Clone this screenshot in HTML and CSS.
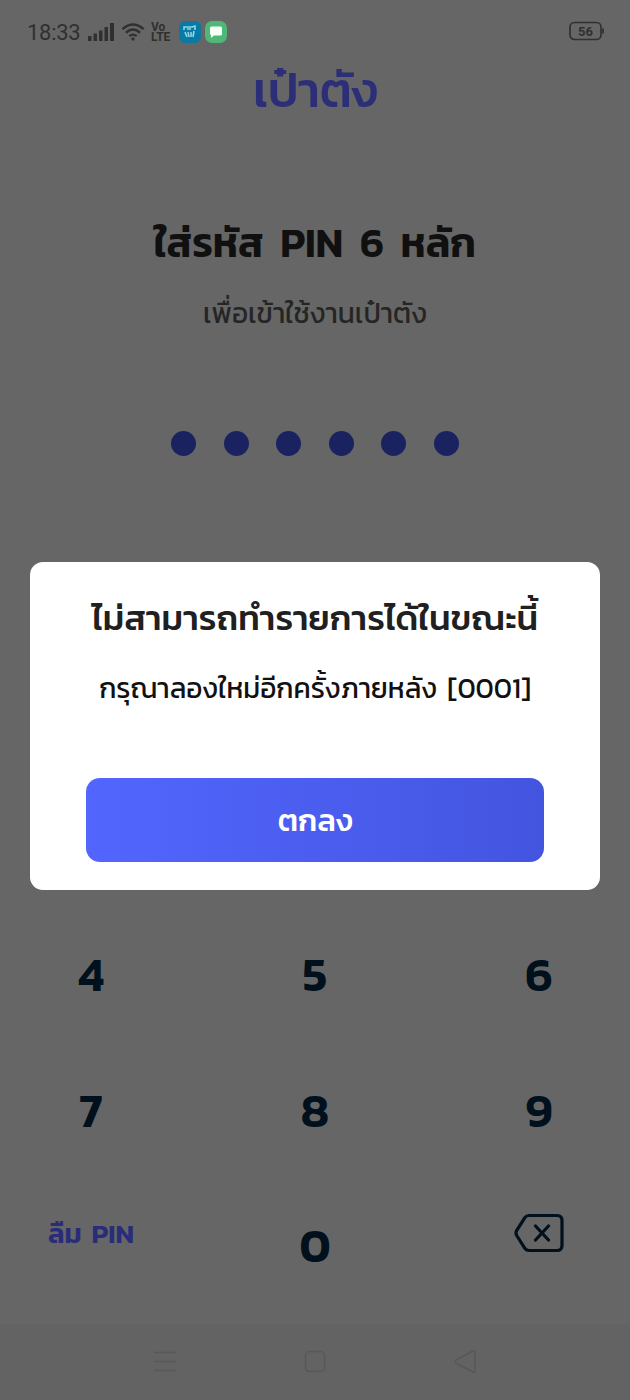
FILE: index.html
```
<!DOCTYPE html>
<html lang="th">
<head>
<meta charset="utf-8">
<title>เป๋าตัง</title>
<link rel="stylesheet" href="styles.css">
</head>
<body>
<div class="phone">
  <header class="status">
    <span class="time">18:33</span>
    <svg class="signal" width="26" height="18" viewBox="0 0 26 18"><path d="M0 13h3.500v5H0zM5.500 10.500H9V18H5.500zM11 7.500h3.500V18H11zM16.500 4H20v14h-3.500zM22 0h4v18h-4z"/></svg>
    <svg class="wifi" width="24" height="20" viewBox="0 0 26 20"><path d="M1.500 6.800Q13-3.200 24.500 6.800M5.300 10.800Q13 4 20.700 10.800M9 14.500Q13 11.200 17 14.500"/><circle cx="13" cy="17.500" r="1.800"/></svg>
    <span class="volte">Vo<br>LTE</span>
    <svg class="app" width="22" height="22" viewBox="0 0 22 22"><rect width="22" height="22" rx="6" fill="#087aa5"/><path d="M5 9V6h8l3-1v4M6 11l2 5M9 11l1 5M12 11v5M15 10l-1 6M8 8h4" fill="none" stroke="#91d5e9" stroke-width="1.600"/></svg>
    <svg class="chat" width="22" height="22" viewBox="0 0 22 22"><rect width="22" height="22" rx="7" fill="#4fb878"/><path d="M6.500 5.500h9q1.500 0 1.500 1.500v6q0 1.500-1.500 1.500H9L6 17v-3q-1-.3-1-1.500V7q0-1.500 1.500-1.500z" fill="#f5fff8"/></svg>
    <svg class="battery" width="35" height="20" viewBox="0 0 35 20"><rect x="1" y="1.500" width="31" height="17" rx="4.500"/><path d="M34 7.500v5"/><text x="16.500" y="15">56</text></svg>
  </header>
  <h1 class="brand"><span>เป๋าตัง</span></h1>
  <h2 class="heading"><span>ใส่รหัส PIN 6 หลัก</span></h2>
  <p class="subtitle"><span>เพื่อเข้าใช้งานเป๋าตัง</span></p>
  <div class="dots"><i></i><i></i><i></i><i></i><i></i><i></i></div>
  <section class="dialog">
    <h3 class="dialog-title"><span>ไม่สามารถทำรายการได้ในขณะนี้</span></h3>
    <p class="message"><span>กรุณาลองใหม่อีกครั้งภายหลัง [0001]</span></p>
    <button class="confirm"><span>ตกลง</span></button>
  </section>
  <div class="keypad">
    <span>4</span><span>5</span><span>6</span>
    <span>7</span><span>8</span><span>9</span>
    <span class="forgot"><span>ลืม PIN</span></span><span>0</span>
    <span class="delete"><svg width="50" height="40" viewBox="0 0 50 40"><path d="M15 2.500h28q5 0 5 5v25q0 5-5 5H15q-2.500 0-4-2L3 23q-2-3 0-6l8-12.500q1.500-2 4-2zM21.500 13l13 14M34.500 13l-13 14"/></svg></span>
  </div>
  <nav class="system">
    <svg width="24" height="26" viewBox="0 0 24 26"><path d="M1 3.500h22M1 12.500h22M1 21.500h22"/></svg>
    <svg width="24" height="26" viewBox="0 0 24 26"><rect x="2.500" y="2.500" width="19" height="20" rx="4"/></svg>
    <svg width="24" height="26" viewBox="0 0 24 26"><path d="M20 2q2-1 2 1v19q0 2-2 1L3 14q-2-1.500 0-3z"/></svg>
  </nav>
</div>
</body>
</html>
```
FILE: styles.css
```
* { box-sizing: border-box; }
body { margin: 0; }
.phone {
  width: 630px;
  height: 1400px;
  display: flex;
  flex-direction: column;
  overflow: hidden;
  background: #666;
  color: #101010;
  font-family: Kanit, Prompt, "Noto Sans Thai", "Noto Sans", sans-serif;
}
h1, h2, h3, p { margin: 0; text-align: center; white-space: nowrap; }
.status {
  height: 62px;
  padding: 0 26px 0 27px;
  display: flex;
  align-items: center;
  color: #303030;
  font-family: Roboto, sans-serif;
}
.time { font-size: 22px; width: 61px; letter-spacing: -.3px; padding-top: 2px; }
.signal { fill: #303030; margin: 1px 7px 0 0; }
.wifi { fill: none; stroke: #303030; stroke-width: 2.6; margin: 1px 6px 0 0; }
.wifi circle { fill: #303030; stroke: none; }
.volte { font-size: 12px; font-weight: 700; line-height: 10px; width: 28px; padding-top: 1px; }
.app { margin: 1px 4px 0 0; }
.chat { margin-top: 1px; }
.battery { margin-left: auto; fill: none; stroke: #303030; stroke-width: 1.7; }
.battery text { fill: #303030; stroke: none; font: bold 13px Roboto, sans-serif; text-anchor: middle; }
.brand { height: 62px; line-height: 56px; font-size: 49px; font-weight: 500; letter-spacing: -.4px; color: #2c2f78; }
.heading { height: 60px; margin-top: 89px; line-height: 59px; font-size: 41px; font-weight: 600; word-spacing: 8px; letter-spacing: -.1px; }
.subtitle { height: 40px; margin-top: 20px; line-height: 40px; font-size: 28px; font-weight: 400; color: #252525; }
.dots { display: flex; justify-content: center; gap: 27.5px; margin-top: 98px; }
.dots i { width: 25px; height: 25px; border-radius: 50%; background: #1b2260; }
.dialog {
  width: 570px;
  height: 328px;
  margin: 106px 0 0 30px;
  padding: 27px 56px 28px;
  border-radius: 13px;
  background: #fff;
  display: flex;
  flex-direction: column;
}
.dialog-title { height: 60px; line-height: 58px; font-size: 35px; font-weight: 500; color: #202020; }
.message { height: 50px; line-height: 48px; margin-top: 15px; font-size: 28px; color: #111; word-spacing: 4px; }
.confirm {
  height: 84px;
  margin-top: auto;
  border: 0;
  border-radius: 14px;
  background: linear-gradient(90deg, #5266ff, #4355df);
  color: #fff;
  font: 500 31px Kanit, Prompt, "Noto Sans Thai", "Noto Sans", sans-serif;
}
.keypad {
  height: 434px;
  padding: 17px 3px 0;
  display: grid;
  grid-template-columns: 176px 1fr 176px;
  grid-template-rows: repeat(3, 135.5px);
  place-items: center;
  color: #00101c;
  font-size: 47px;
  font-weight: 600;
}
.forgot { font-size: 27.5px; color: #292d79; white-space: nowrap; padding-bottom: 24px; word-spacing: 4px; }
.delete { padding-bottom: 25px; line-height: 0; }
.delete svg { fill: none; stroke: #00101c; stroke-width: 3.2; stroke-linecap: round; }
.system {
  flex: 1;
  display: flex;
  justify-content: center;
  align-items: center;
  gap: 126px;
  background: #636363;
}
.system svg { fill: none; stroke: #585858; stroke-width: 1.5; }
```
